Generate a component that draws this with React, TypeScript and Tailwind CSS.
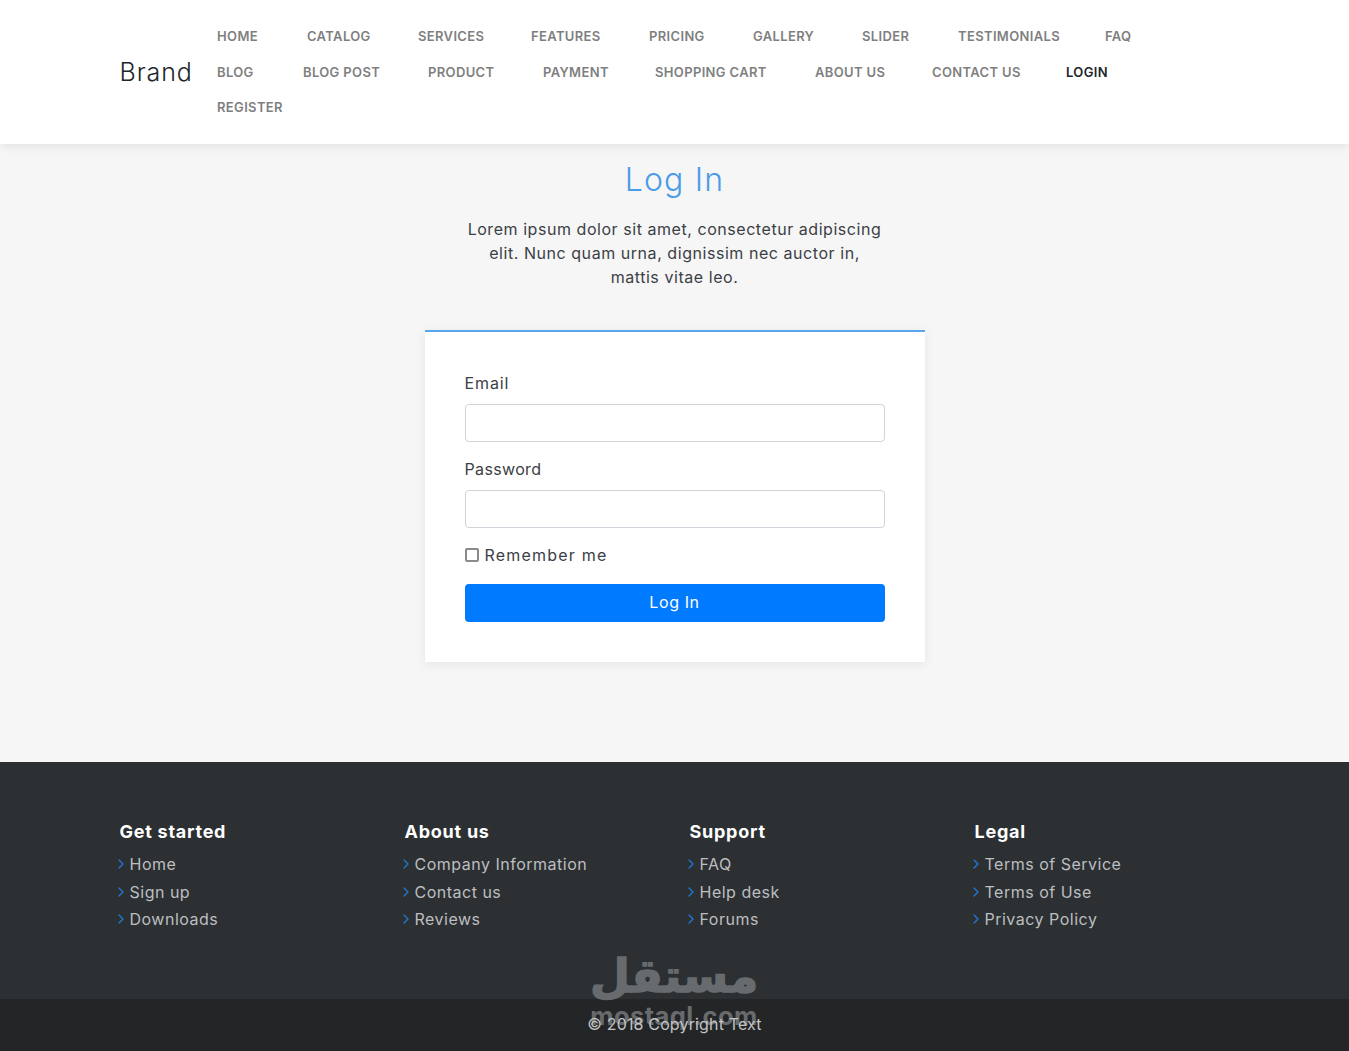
import { ChevronRight } from 'lucide-react'

const navRows = [
  [
    { label: 'HOME', width: 'w-[90px]' },
    { label: 'CATALOG', width: 'w-[111px]' },
    { label: 'SERVICES', width: 'w-[113px]' },
    { label: 'FEATURES', width: 'w-[118px]' },
    { label: 'PRICING', width: 'w-[104px]' },
    { label: 'GALLERY', width: 'w-[109px]' },
    { label: 'SLIDER', width: 'w-[96px]' },
    { label: 'TESTIMONIALS', width: 'w-[147px]' },
    { label: 'FAQ', width: 'w-[60px]' },
  ],
  [
    { label: 'BLOG', width: 'w-[86px]' },
    { label: 'BLOG POST', width: 'w-[125px]' },
    { label: 'PRODUCT', width: 'w-[115px]' },
    { label: 'PAYMENT', width: 'w-[112px]' },
    { label: 'SHOPPING CART', width: 'w-[160px]' },
    { label: 'ABOUT US', width: 'w-[117px]' },
    { label: 'CONTACT US', width: 'w-[134px]' },
    { label: 'LOGIN', width: 'w-[70px]', active: true },
  ],
  [{ label: 'REGISTER', width: 'w-[90px]' }],
]

const footerCols = [
  { title: 'Get started', links: ['Home', 'Sign up', 'Downloads'] },
  { title: 'About us', links: ['Company Information', 'Contact us', 'Reviews'] },
  { title: 'Support', links: ['FAQ', 'Help desk', 'Forums'] },
  { title: 'Legal', links: ['Terms of Service', 'Terms of Use', 'Privacy Policy'] },
]

export default function App() {
  return (
    <div className="relative min-h-[1051px] bg-[#f6f6f6] font-['Inter',sans-serif] text-[#3b4045] overflow-hidden">
      {/* Header */}
      <header className="relative z-10 h-[144px] bg-white shadow-[0_2px_10px_rgba(0,0,0,0.09)]">
        <div className="mx-auto flex h-full w-[1110px] items-center">
          <a className="mt-[2px] w-[97.5px] shrink-0 text-[25px] font-light tracking-[0.9px] text-[#212529]">Brand</a>
          <nav className="flex flex-col text-[13px]">
            {navRows.map((row, i) => (
              <div key={i} className="flex h-[36px] items-center last:h-[35px]">
                {row.map(({ label, width, active }) => (
                  <a
                    key={label}
                    className={`${width} whitespace-nowrap font-semibold tracking-[0.35px] ${
                      active ? 'text-[#212529]' : 'text-[#7f7f7f]'
                    }`}
                  >
                    {label}
                  </a>
                ))}
              </div>
            ))}
          </nav>
        </div>
      </header>

      {/* Login */}
      <main className="h-[618px] pt-[14px]">
        <h2 className="text-center text-[32px] leading-[44px] font-light tracking-[1.2px] text-[#4a9ce8]">Log In</h2>
        <p className="mx-auto mt-[15px] w-[500px] text-center text-[16px] leading-[24px] tracking-[0.55px]">
          Lorem ipsum dolor sit amet, consectetur adipiscing
          <br />
          elit. Nunc quam urna, dignissim nec auctor in,
          <br />
          mattis vitae leo.
        </p>
        <form className="mx-auto mt-[41px] h-[332px] w-[500px] border-t-2 border-[#5aa6ee] bg-white px-[40px] pt-[39px] shadow-[0_2px_10px_rgba(0,0,0,0.075)]">
          <label className="block text-[16px] leading-[24px] tracking-[0.9px]">Email</label>
          <input className="mt-[9px] block h-[38px] w-full rounded-[4px] border border-[#ced4da] bg-white" />
          <label className="mt-[15px] block text-[16px] leading-[24px] tracking-[0.35px]">Password</label>
          <input className="mt-[9px] block h-[38px] w-full rounded-[4px] border border-[#ced4da] bg-white" />
          <div className="mt-[15px] flex h-[24px] items-center">
            <span className="h-[14px] w-[14px] rounded-[2px] border-2 border-[#8a8a8a]" />
            <span className="ml-[6px] tracking-[1.2px]">Remember me</span>
          </div>
          <button
            type="button"
            className="mt-[17px] block h-[38px] w-full rounded-[4px] bg-[#007bff] pb-[2px] text-[16px] tracking-[0.6px] text-white"
          >
            Log In
          </button>
        </form>
      </main>

      {/* Footer */}
      <footer className="bg-[#2c3033]">
        <div className="mx-auto grid h-[237px] w-[1140px] grid-cols-[repeat(4,285px)] pt-[56px] pl-[15px]">
          {footerCols.map(({ title, links }) => (
            <div key={title}>
              <h5 className="text-[18px] leading-[28px] font-bold tracking-[0.75px] text-white">{title}</h5>
              <ul className="mt-[4px]">
                {links.map((link) => (
                  <li key={link} className="flex h-[27.5px] items-center text-[16px] tracking-[0.5px] text-[#bcbec0] first:h-[28px]">
                    <ChevronRight className="ml-[-6.5px] h-[16px] w-[16px] shrink-0 text-[#2176d2]" strokeWidth={2} />
                    <span className="ml-[0.5px]">{link}</span>
                  </li>
                ))}
              </ul>
            </div>
          ))}
        </div>
        <div className="flex h-[52px] items-center justify-center bg-[#232527] pb-[2px] text-[16px] tracking-[0.15px] text-[#c4c5c6]">
          <span className="relative z-10">© 2018 Copyright Text</span>
        </div>
      </footer>

      {/* Watermark */}
      <div className="pointer-events-none absolute top-[940px] left-[592px] flex w-[164px] flex-col items-center text-[#686b6e]">
        <span
          dir="rtl"
          className="font-['DejaVu_Sans',sans-serif] text-[46px] leading-[72px] font-bold whitespace-nowrap [-webkit-text-stroke:1.5px_#686b6e]"
        >
          مستقل
        </span>
        <span className="mt-[-10px] text-[25.5px] leading-[28px] font-bold tracking-[0.4px] whitespace-nowrap">
          mostaql.com
        </span>
      </div>
    </div>
  )
}
